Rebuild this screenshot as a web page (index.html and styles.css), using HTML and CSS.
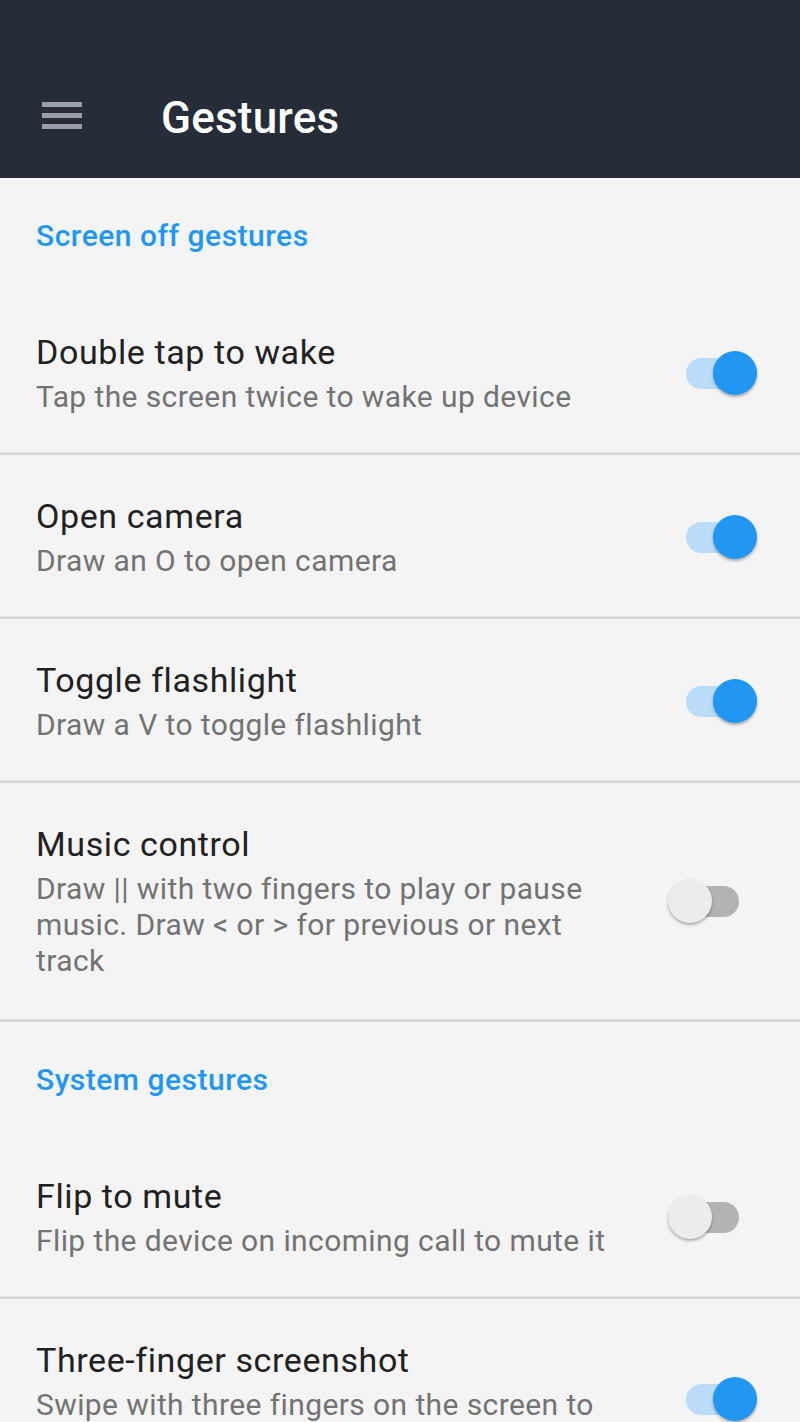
FILE: index.html
```html
<!DOCTYPE html>
<html>
<head>
<meta charset="utf-8">
<link rel="stylesheet" href="styles.css">
</head>
<body>
<header class="appbar">
  <div class="menu"><span></span><span></span><span></span></div>
  <h1 class="title">Gestures</h1>
</header>
<main class="list">
  <div class="section">Screen off gestures</div>
  <div class="item">
    <div class="text">
      <div class="item-title">Double tap to wake</div>
      <div class="item-sub">Tap the screen twice to wake up device</div>
    </div>
    <div class="switch on"><span class="track"></span><span class="thumb"></span></div>
  </div>
  <div class="item">
    <div class="text">
      <div class="item-title">Open camera</div>
      <div class="item-sub">Draw an O to open camera</div>
    </div>
    <div class="switch on"><span class="track"></span><span class="thumb"></span></div>
  </div>
  <div class="item">
    <div class="text">
      <div class="item-title">Toggle flashlight</div>
      <div class="item-sub">Draw a V to toggle flashlight</div>
    </div>
    <div class="switch on"><span class="track"></span><span class="thumb"></span></div>
  </div>
  <div class="item tall">
    <div class="text">
      <div class="item-title">Music control</div>
      <div class="item-sub">Draw || with two fingers to play or pause music. Draw &lt; or &gt; for previous or next track</div>
    </div>
    <div class="switch off"><span class="track"></span><span class="thumb"></span></div>
  </div>
  <div class="section">System gestures</div>
  <div class="item">
    <div class="text">
      <div class="item-title">Flip to mute</div>
      <div class="item-sub">Flip the device on incoming call to mute it</div>
    </div>
    <div class="switch off"><span class="track"></span><span class="thumb"></span></div>
  </div>
  <div class="item">
    <div class="text">
      <div class="item-title">Three-finger screenshot</div>
      <div class="item-sub">Swipe with three fingers on the screen to take a screenshot</div>
    </div>
    <div class="switch on"><span class="track"></span><span class="thumb"></span></div>
  </div>
</main>
</body>
</html>
```
FILE: styles.css
```css
html, body {
  margin: 0;
  padding: 0;
}
body {
  background: #f4f4f4;
  font-family: Roboto, "Noto Sans", "DejaVu Sans", sans-serif;
  width: 800px;
  height: 1422px;
  overflow: hidden;
}
.appbar {
  height: 178px;
  background: #262d38;
  display: flex;
  align-items: flex-end;
  box-sizing: border-box;
  padding: 0 0 38px 42px;
}
.menu {
  width: 40px;
  height: 27px;
  display: flex;
  flex-direction: column;
  justify-content: space-between;
  margin-bottom: 11px;
}
.menu span {
  display: block;
  height: 5px;
  background: #9b9fa5;
}
.title {
  margin: 0 0 0 79px;
  color: #ffffff;
  font-size: 44px;
  font-weight: 500;
  line-height: 44px;
  letter-spacing: 0.2px;
}
.list {
  display: flex;
  flex-direction: column;
}
.section {
  height: 113px;
  box-sizing: border-box;
  padding: 40px 36px 0;
  line-height: 36px;
  font-size: 30px;
  font-weight: 500;
  letter-spacing: 0.5px;
  color: #2196f3;
}
.item {
  display: flex;
  align-items: center;
  padding: 39px 43px 38px 36px;
  border-bottom: 2px solid #d4d4d4;
  box-shadow: inset 0 -1px 0 #e3e3e3;
}
.item.tall {
  padding-bottom: 41px;
}
.text {
  width: 600px;
  flex: none;
}
.item-title {
  font-size: 34px;
  line-height: 44px;
  letter-spacing: 0.6px;
  color: #212121;
}
.item-sub {
  margin-top: 5px;
  font-size: 30px;
  line-height: 36px;
  letter-spacing: 0.4px;
  color: #737373;
}
.switch {
  position: relative;
  margin-left: auto;
  width: 89px;
  height: 44px;
  flex: none;
}
.track {
  position: absolute;
  left: 18px;
  top: 7px;
  width: 53px;
  height: 31px;
  border-radius: 16px;
}
.thumb {
  position: absolute;
  top: 0;
  width: 44px;
  height: 44px;
  border-radius: 50%;
  box-shadow: 0 2px 3px rgba(0, 0, 0, 0.3);
}
.on .track { background: #badcf8; }
.on .thumb { left: 45px; background: #2196f3; }
.off .track { background: #b3b3b3; }
.off .thumb { left: 0; background: #ececec; }
```
